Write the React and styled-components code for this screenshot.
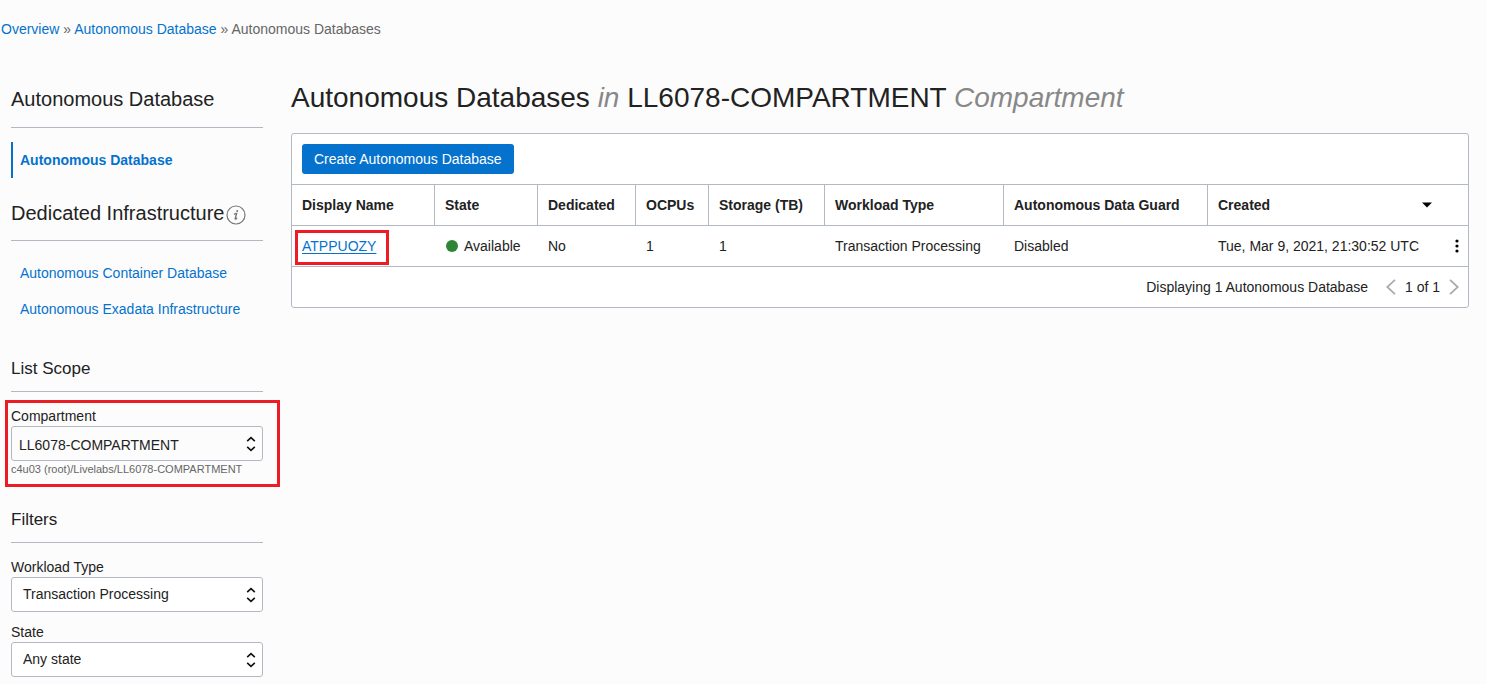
import React from "react";
import styled, { createGlobalStyle } from "styled-components";

const GlobalStyle = createGlobalStyle`
  *, *::before, *::after { box-sizing: border-box; }
  body {
    margin: 0;
    background: #fcfcfc;
    color: #222;
    font-family: "Liberation Sans", Arial, sans-serif;
    font-size: 14px;
    line-height: 20px;
  }
  h1, h2, h3, p, ul { margin: 0; padding: 0; font-weight: 400; }
  button, select { font: inherit; color: inherit; }
`;

const Link = styled.a`
  color: #0572ce;
  text-decoration: ${(p) => (p.$underlined ? "underline" : "none")};
  text-underline-offset: 2px;
  text-decoration-skip-ink: none;
  &:hover { text-decoration: underline; }
`;

const Breadcrumbs = styled.nav`
  padding: 19px 1px 0;
  color: #666;
`;

const Layout = styled.div`
  display: flex;
  align-items: flex-start;
  gap: 28px;
  padding: 41px 18px 7px 11px;
`;

const Sidebar = styled.aside`
  flex: 0 0 252px;
  padding-top: 5px;
`;

const SideTitle = styled.h2`
  display: flex;
  align-items: center;
  gap: 2px;
  margin-top: ${(p) => (p.$spaced ? "21px" : "0")};
  padding-bottom: ${(p) => (p.$spaced ? "13px" : "14px")};
  border-bottom: 1px solid #b3b9c3;
  font-size: 20px;
  line-height: 28px;
  white-space: nowrap;
`;

const SideList = styled.ul`
  margin-top: 14px;
  list-style: none;
`;

const SideLink = styled(Link)`
  display: block;
  padding-left: ${(p) => (p.$active ? "7px" : "9px")};
  border-left: ${(p) => (p.$active ? "2px solid #0572ce" : "0")};
  font-weight: ${(p) => (p.$active ? 700 : 400)};
  line-height: 36px;
`;

const InfoButton = styled.button`
  display: flex;
  padding: 3px 0 0;
  border: 0;
  background: none;
  color: #777;
`;

const GroupTitle = styled.h3`
  margin-top: 30px;
  margin-bottom: 14px;
  padding-bottom: 10px;
  border-bottom: 1px solid #b3b9c3;
  font-size: 17px;
  line-height: 24px;
`;

const Field = styled.div`
  position: relative;
  & + & { margin-top: 10px; }
`;

const FieldLabel = styled.label`
  display: block;
`;

const SelectBox = styled.div`
  display: grid;
  align-items: center;
  > * { grid-area: 1 / 1; }
  > svg { justify-self: end; margin-right: 7px; pointer-events: none; }
`;

const Select = styled.select`
  appearance: none;
  width: 100%;
  height: 35px;
  padding: ${(p) => (p.$tight ? "2px 28px 0 7px" : "0 28px 1px 11px")};
  border: 1px solid #b3b9c3;
  border-radius: 3px;
  background: ${(p) => (p.$tight ? "#fcfcfc" : "#fff")};
`;

const Hint = styled.p`
  color: #666;
  font-size: 11px;
  line-height: 17px;
  white-space: nowrap;
`;

const Highlight = styled.span`
  position: absolute;
  inset: ${(p) => p.$inset};
  border: 3px solid #ed1c24;
  pointer-events: none;
`;

const Main = styled.main`
  flex: 1;
  min-width: 0;
`;

const PageTitle = styled.h1`
  margin-bottom: 17px;
  font-size: 28px;
  line-height: 36px;
  em { color: #888; }
`;

const Panel = styled.section`
  border: 1px solid #b3b9c3;
  border-radius: 3px;
  background: #fff;
`;

const Toolbar = styled.div`
  padding: 10px;
`;

const PrimaryButton = styled.button`
  height: 30px;
  padding: 0 12px;
  border: 0;
  border-radius: 3px;
  background: #0572ce;
  color: #fff;
`;

const Table = styled.table`
  width: 100%;
  table-layout: fixed;
  border-collapse: separate;
  border-spacing: 0;
  border-top: 1px solid #b3b9c3;
`;

const Col = styled.col`
  width: ${(p) => p.$width};
`;

const HeaderCell = styled.th`
  height: 41px;
  padding: 0 4px 0 10px;
  border-bottom: 1px solid #b3b9c3;
  border-right: ${(p) => (p.$open ? "0" : "1px solid #b3b9c3")};
  text-align: left;
  white-space: nowrap;
`;

const Cell = styled.td`
  height: 41px;
  padding: 0 0 0 10px;
  border-bottom: 1px solid #b3b9c3;
  white-space: nowrap;
`;

const SortButton = styled.button`
  display: flex;
  align-items: center;
  justify-content: space-between;
  width: 100%;
  padding: 0;
  border: 0;
  background: none;
  font-weight: 700;
`;

const Status = styled.span`
  display: flex;
  align-items: center;
  gap: 6px;
  padding-left: 1px;
  &::before {
    content: "";
    width: 12px;
    height: 12px;
    border-radius: 50%;
    background: #2e8536;
  }
`;

const Marked = styled.span`
  position: relative;
  display: inline-block;
`;

const IconButton = styled.button`
  display: flex;
  margin-left: auto;
  padding: 0;
  border: 0;
  background: none;
  color: ${(p) => (p.$muted ? "#aaa" : "#000")};
`;

const ActionCell = styled(Cell)`
  padding: 0 9px 0 0;
`;

const Footer = styled.div`
  display: flex;
  justify-content: flex-end;
  align-items: center;
  gap: 18px;
  height: 40px;
  padding-right: 9px;
`;

const Pager = styled.div`
  display: flex;
  align-items: center;
  gap: 9px;
`;

const UpDown = () => (
  <svg width="10" height="16" viewBox="0 0 10 16" fill="none" stroke="#111" strokeWidth="1.6" aria-hidden="true">
    <path d="M1.2 5.2 5 1.6l3.8 3.6M1.2 10.8 5 14.4l3.8-3.6" />
  </svg>
);

const InfoIcon = () => (
  <svg width="20" height="20" viewBox="0 0 20 20" fill="none" stroke="currentColor" aria-hidden="true">
    <circle cx="10" cy="10" r="9" strokeWidth="1.2" />
    <circle cx="11.2" cy="6" r="1" fill="currentColor" stroke="none" />
    <path d="M8 9.3c1-.6 1.8-.9 2.6-.9L9.2 13.6c-.1.6.4.6 1.9-.5" strokeWidth="1.4" />
  </svg>
);

const Chevron = ({ next }) => (
  <svg width="10" height="16" viewBox="0 0 10 16" fill="none" stroke="currentColor" strokeWidth="1.8" aria-hidden="true">
    <path d={next ? "M1 .8 8.8 8 1 15.2" : "M9 .8 1.2 8 9 15.2"} />
  </svg>
);

const columns = [
  ["Display Name", "143px"],
  ["State", "103px"],
  ["Dedicated", "98px"],
  ["OCPUs", "73px"],
  ["Storage (TB)", "116px"],
  ["Workload Type", "179px"],
  ["Autonomous Data Guard", "204px"],
];

function SelectField({ id, label, value, tight, children }) {
  return (
    <Field>
      <FieldLabel htmlFor={id}>{label}</FieldLabel>
      <SelectBox>
        <Select id={id} $tight={tight}>
          <option>{value}</option>
        </Select>
        <UpDown />
      </SelectBox>
      {children}
    </Field>
  );
}

export default function App() {
  return (
    <>
      <GlobalStyle />
      <Breadcrumbs aria-label="Breadcrumb">
        <Link href="#overview">Overview</Link> » <Link href="#adb">Autonomous Database</Link> » Autonomous Databases
      </Breadcrumbs>
      <Layout>
        <Sidebar>
          <SideTitle>Autonomous Database</SideTitle>
          <SideList>
            <li><SideLink href="#adb" $active>Autonomous Database</SideLink></li>
          </SideList>
          <SideTitle $spaced>
            Dedicated Infrastructure
            <InfoButton type="button" aria-label="About dedicated infrastructure"><InfoIcon /></InfoButton>
          </SideTitle>
          <SideList>
            <li><SideLink href="#container">Autonomous Container Database</SideLink></li>
            <li><SideLink href="#exadata">Autonomous Exadata Infrastructure</SideLink></li>
          </SideList>

          <GroupTitle>List Scope</GroupTitle>
          <SelectField id="compartment" label="Compartment" value="LL6078-COMPARTMENT" tight>
            <Hint>c4u03 (root)/Livelabs/LL6078-COMPARTMENT</Hint>
            <Highlight $inset="-6px -17px -9px -6px" />
          </SelectField>

          <GroupTitle>Filters</GroupTitle>
          <SelectField id="workload" label="Workload Type" value="Transaction Processing" />
          <SelectField id="state" label="State" value="Any state" />
        </Sidebar>

        <Main>
          <PageTitle>
            Autonomous Databases <em>in</em> LL6078-COMPARTMENT <em>Compartment</em>
          </PageTitle>
          <Panel>
            <Toolbar>
              <PrimaryButton type="button">Create Autonomous Database</PrimaryButton>
            </Toolbar>
            <Table>
              <colgroup>
                {columns.map(([name, width]) => <Col key={name} $width={width} />)}
                <Col $width="auto" />
                <Col $width="31px" />
              </colgroup>
              <thead>
                <tr>
                  {columns.map(([name]) => <HeaderCell key={name} scope="col">{name}</HeaderCell>)}
                  <HeaderCell scope="col" aria-sort="descending" $open>
                    <SortButton type="button">
                      Created
                      <svg width="12" height="6" viewBox="0 0 12 6" aria-hidden="true"><path d="M1 0.5h10L6 5.5z" fill="#000" /></svg>
                    </SortButton>
                  </HeaderCell>
                  <HeaderCell scope="col" aria-label="Actions" $open />
                </tr>
              </thead>
              <tbody>
                <tr>
                  <Cell>
                    <Marked>
                      <Link href="#atppuozy" $underlined>ATPPUOZY</Link>
                      <Highlight $inset="-6px -13px -9px -7px" />
                    </Marked>
                  </Cell>
                  <Cell><Status>Available</Status></Cell>
                  <Cell>No</Cell>
                  <Cell>1</Cell>
                  <Cell>1</Cell>
                  <Cell>Transaction Processing</Cell>
                  <Cell>Disabled</Cell>
                  <Cell>Tue, Mar 9, 2021, 21:30:52 UTC</Cell>
                  <ActionCell>
                    <IconButton type="button" aria-label="Row actions">
                      <svg width="4" height="14" viewBox="0 0 4 14" fill="currentColor" aria-hidden="true">
                        <circle cx="2" cy="2" r="1.6" /><circle cx="2" cy="7" r="1.6" /><circle cx="2" cy="12" r="1.6" />
                      </svg>
                    </IconButton>
                  </ActionCell>
                </tr>
              </tbody>
            </Table>
            <Footer>
              <span>Displaying 1 Autonomous Database</span>
              <Pager>
                <IconButton type="button" aria-label="Previous page" $muted><Chevron /></IconButton>
                <span>1 of 1</span>
                <IconButton type="button" aria-label="Next page" $muted><Chevron next /></IconButton>
              </Pager>
            </Footer>
          </Panel>
        </Main>
      </Layout>
    </>
  );
}
